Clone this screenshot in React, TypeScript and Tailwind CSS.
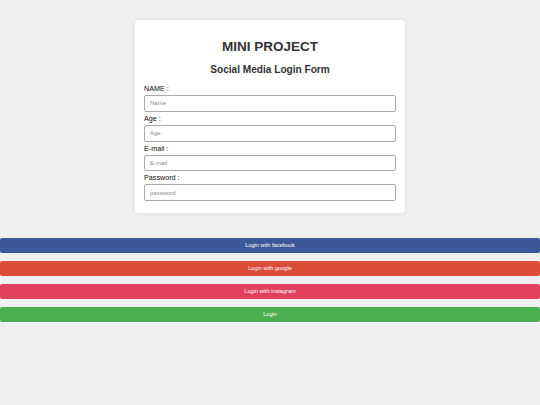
import React from "react";

const fields = [
  { label: "NAME :", placeholder: "Name", type: "text" },
  { label: "Age :", placeholder: "Age", type: "text" },
  { label: "E-mail :", placeholder: "E-mail", type: "text" },
  { label: "Password :", placeholder: "password", type: "password" },
];

export default function App() {
  return (
    <div
      className="min-h-[405px] w-full bg-[#f0f0f0] pt-[20px]"
      style={{ fontFamily: '"Liberation Sans", Arial, sans-serif' }}
    >
      <div className="mx-auto w-[270px] rounded-[4px] bg-white px-[9px] pt-[19px] pb-[12px] shadow-[0_0_6px_rgba(0,0,0,0.08)]">
        <h1 className="text-center text-[13.5px] font-bold leading-[16px] text-[#333]">
          MINI PROJECT
        </h1>
        <h2 className="mt-[8.75px] text-center text-[10.1px] font-bold leading-[12px] text-[#333]">
          Social Media Login Form
        </h2>
        <div className="mt-[8.25px] flex flex-col gap-[2px]">
          {fields.map((f) => (
            <div key={f.label} className="flex flex-col">
              <label className="mb-[1px] text-[7.2px] leading-[10px] text-[#111]">
                {f.label}
              </label>
              <input
                type={f.type}
                placeholder={f.placeholder}
                className="h-[16.8px] w-full rounded-[2px] border border-[#aaa] bg-white px-[5px] text-[6px] text-[#333] outline-none placeholder:text-[#8a8a8a]"
              />
            </div>
          ))}
        </div>
      </div>
      <div className="mt-[25px] flex flex-col gap-[8.4px]">
        <button className="h-[14.6px] w-full rounded-[2px] bg-[#3b5998] text-[5.6px] text-white">
          Login with facebook
        </button>
        <button className="h-[14.6px] w-full rounded-[2px] bg-[#dd4b39] text-[5.6px] text-white">
          Login with google
        </button>
        <button className="h-[14.6px] w-full rounded-[2px] bg-[#e1405f] text-[5.6px] text-white">
          Login with instagram
        </button>
        <button className="h-[14.6px] w-full rounded-[2px] bg-[#4caf50] text-[5.6px] text-white">
          Login
        </button>
      </div>
    </div>
  );
}
